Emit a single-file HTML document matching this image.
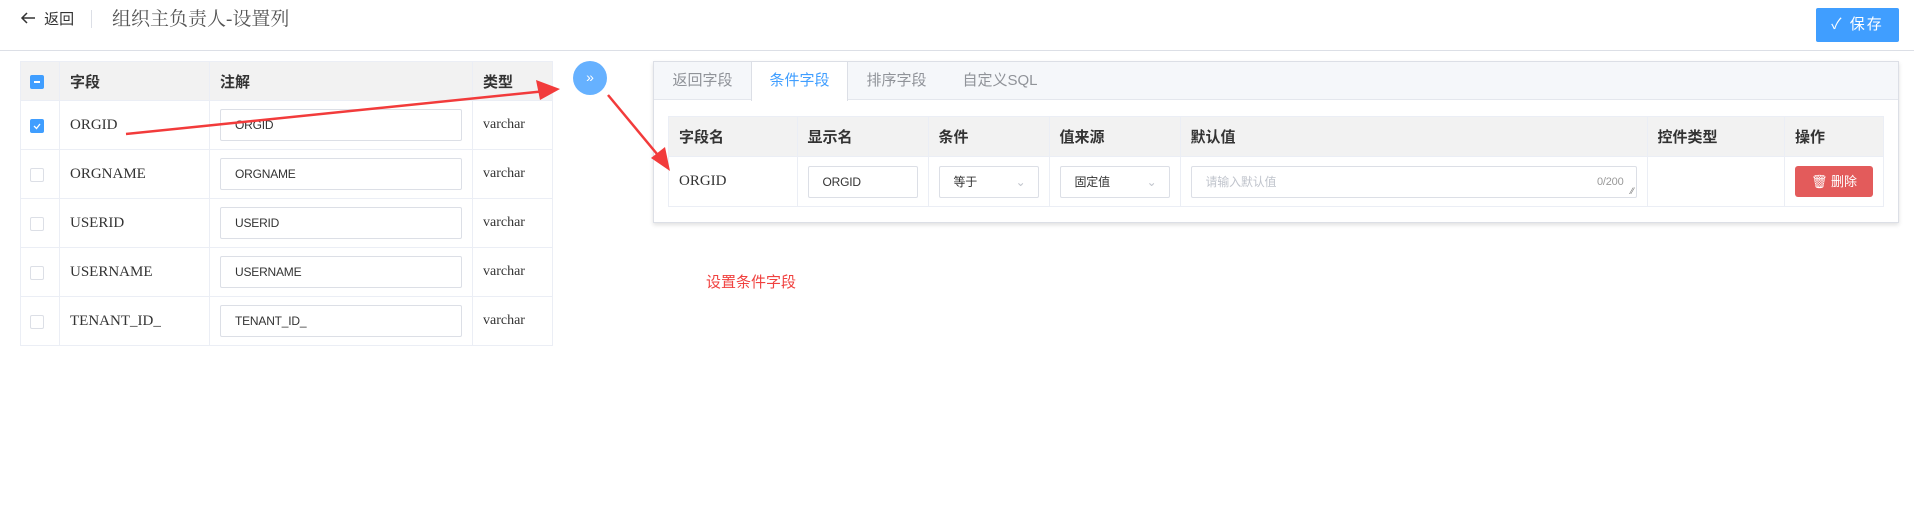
<!DOCTYPE html>
<html><head><meta charset="utf-8"><style>
*{margin:0;padding:0;box-sizing:border-box}
body{width:1914px;height:512px;background:#fff;position:relative;overflow:hidden;font-family:"Liberation Sans","Noto Sans CJK SC",sans-serif;color:#333}
.a{position:absolute}
.sf{font-family:"Liberation Serif","Noto Serif CJK SC",serif}
table{border-collapse:collapse;position:absolute}
td,th{border:1px solid #ebeef5;text-align:left;font-weight:bold;font-size:15px;padding:0 10px}
th{background:#f2f2f2}
.inp{border:1px solid #dcdfe6;border-radius:2px;height:32px;line-height:30px;font-size:12px;padding-left:14px;color:#333;font-weight:normal;background:#fff;letter-spacing:-0.2px}
.cb{width:14px;height:14px;border:1px solid #dcdfe6;border-radius:2px;background:#fff;display:inline-block;vertical-align:middle}
.cb.on{background:#409eff;border-color:#409eff}
</style></head><body>
<div class="a" style="left:20px;top:9px;font-size:15px;line-height:22px;color:#333">
<svg width="16" height="14" style="vertical-align:-1px" viewBox="0 0 16 14"><path d="M15 7H2M7 2L2 7l5 5" stroke="#333" stroke-width="1.5" fill="none"/></svg>
<span style="margin-left:4px;font-weight:normal">返回</span></div>
<div class="a" style="left:91px;top:10px;width:1px;height:18px;background:#dcdfe6"></div>
<div class="a" style="left:112px;top:4px;font-size:19px;color:#555;font-family:'Liberation Serif','Noto Serif CJK SC',serif">组织主负责人-设置列</div>
<div class="a" style="left:1816px;top:8px;width:83px;height:34px;background:#409eff;border-radius:2px;color:#fff;font-size:15px;line-height:34px;text-align:center;letter-spacing:2px">✓ 保存</div>
<div class="a" style="left:0;top:50px;width:1914px;height:1px;background:#dcdfe6"></div>

<table style="left:20px;top:61px;width:533px">
<tr style="height:39px"><th style="width:39px;padding:0 9px"><span class="cb on" style="position:relative"><span class="a" style="left:3px;top:5px;width:6px;height:2px;background:#fff"></span></span></th><th style="width:150px">字段</th><th style="width:263px">注解</th><th>类型</th></tr>
<tr style="height:49px"><td style="padding:0 9px"><span class="cb on" style="position:relative"><svg class="a" style="left:1px;top:1px" width="10" height="10"><path d="M2 5l2.5 2.5L8 3" stroke="#fff" stroke-width="1.3" fill="none"/></svg></span></td><td class="sf" style="font-weight:normal">ORGID</td><td><div class="inp">ORGID</div></td><td class="sf" style="font-weight:normal;font-size:14px">varchar</td></tr>
<tr style="height:49px"><td style="padding:0 9px"><span class="cb"></span></td><td class="sf" style="font-weight:normal">ORGNAME</td><td><div class="inp">ORGNAME</div></td><td class="sf" style="font-weight:normal;font-size:14px">varchar</td></tr>
<tr style="height:49px"><td style="padding:0 9px"><span class="cb"></span></td><td class="sf" style="font-weight:normal">USERID</td><td><div class="inp">USERID</div></td><td class="sf" style="font-weight:normal;font-size:14px">varchar</td></tr>
<tr style="height:49px"><td style="padding:0 9px"><span class="cb"></span></td><td class="sf" style="font-weight:normal">USERNAME</td><td><div class="inp">USERNAME</div></td><td class="sf" style="font-weight:normal;font-size:14px">varchar</td></tr>
<tr style="height:49px"><td style="padding:0 9px"><span class="cb"></span></td><td class="sf" style="font-weight:normal">TENANT_ID_</td><td><div class="inp">TENANT_ID_</div></td><td class="sf" style="font-weight:normal;font-size:14px">varchar</td></tr>
</table>

<div class="a" style="left:573px;top:61px;width:34px;height:34px;border-radius:50%;background:#66b1ff;color:#fff;text-align:center;line-height:32px;font-size:14px">»</div>

<div class="a" style="left:653px;top:61px;width:1246px;height:162px;border:1px solid #dcdfe6;box-shadow:0 2px 4px rgba(0,0,0,.12);background:#fff">
<div class="a" style="left:0;top:0;width:1244px;height:38px;background:#f5f7fa;border-bottom:1px solid #e4e7ed"></div>
<div class="a" style="left:97px;top:0;width:97px;height:39px;background:#fff;border-left:1px solid #dcdfe6;border-right:1px solid #dcdfe6"></div>
<div class="a" style="left:0;top:0;width:97px;line-height:38px;text-align:center;font-size:15px;color:#909399">返回字段</div>
<div class="a" style="left:97px;top:0;width:97px;line-height:38px;text-align:center;font-size:15px;color:#409eff">条件字段</div>
<div class="a" style="left:194px;top:0;width:97px;line-height:38px;text-align:center;font-size:15px;color:#909399">排序字段</div>
<div class="a" style="left:291px;top:0;width:110px;line-height:38px;text-align:center;font-size:15px;color:#909399">自定义SQL</div>
</div>

<table style="left:668px;top:116px;width:1216px">
<tr style="height:40px"><th style="width:130px">字段名</th><th style="width:130px">显示名</th><th style="width:118px">条件</th><th style="width:130px">值来源</th><th style="width:466px">默认值</th><th style="width:140px">控件类型</th><th>操作</th></tr>
<tr style="height:50px"><td class="sf" style="font-weight:normal">ORGID</td>
<td><div class="inp" style="width:110px">ORGID</div></td>
<td><div class="inp" style="width:100px;position:relative">等于<span class="a" style="right:12px;top:0;color:#c0c4cc">⌄</span></div></td>
<td><div class="inp" style="width:110px;position:relative">固定值<span class="a" style="right:12px;top:0;color:#c0c4cc">⌄</span></div></td>
<td><div class="inp" style="width:446px;position:relative;color:#c0c4cc">请输入默认值<span class="a" style="right:12px;top:0;font-size:11px;color:#999">0/200</span><span class="a" style="right:2px;bottom:1px;font-size:9px;line-height:9px;color:#777">⁄⁄</span></div></td>
<td></td>
<td><div style="width:78px;height:31px;background:#e35b5b;border-radius:3px;color:#fff;font-size:13px;line-height:31px;text-align:center;font-weight:normal">🗑 删除</div></td></tr>
</table>

<div class="a" style="left:706px;top:271px;font-size:15px;color:#f0413f">设置条件字段</div>

<svg class="a" style="left:0;top:0" width="1914" height="512">
<path d="M126 134L546 91" stroke="#f23b3b" stroke-width="2.5"/>
<path d="M560 89L536 80L540 100Z" fill="#f23b3b"/>
<path d="M608 95L662 160" stroke="#f23b3b" stroke-width="2.5"/>
<path d="M670 171L651 158L665 147Z" fill="#f23b3b"/>
</svg>
</body></html>
